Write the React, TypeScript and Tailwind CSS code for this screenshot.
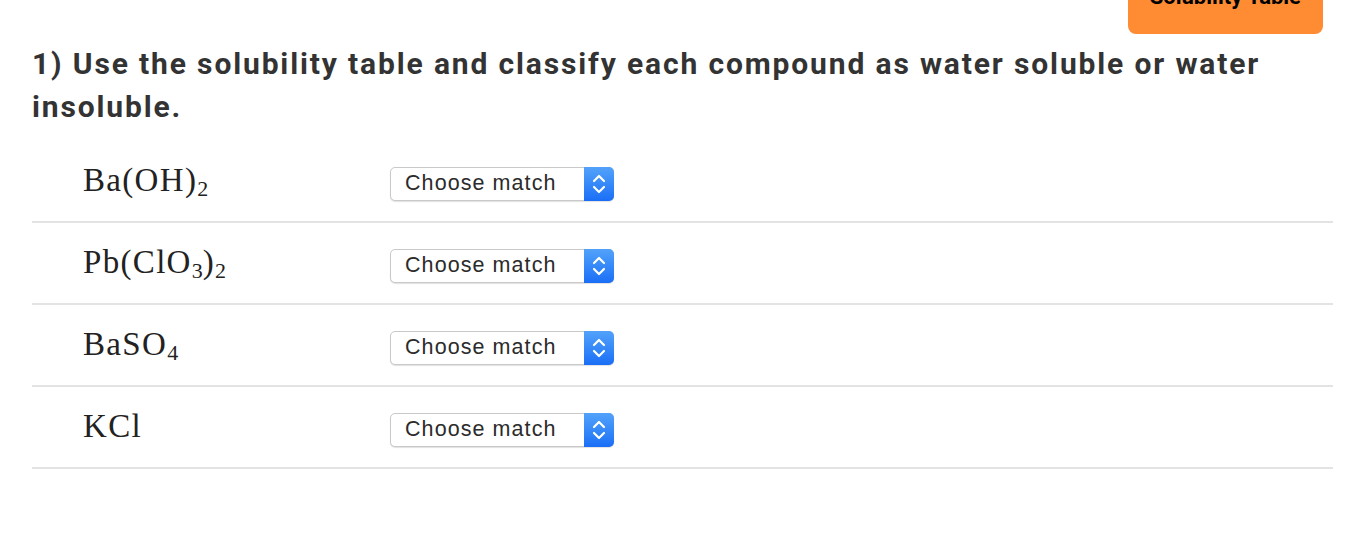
import React from 'react';

type Compound = { id: string; parts: { text: string; sub?: boolean }[] };

const compounds: Compound[] = [
    { id: 'baoh2', parts: [{ text: 'Ba(OH)' }, { text: '2', sub: true }] },
    { id: 'pbclo32', parts: [{ text: 'Pb(ClO' }, { text: '3', sub: true }, { text: ')' }, { text: '2', sub: true }] },
    { id: 'baso4', parts: [{ text: 'BaSO' }, { text: '4', sub: true }] },
    { id: 'kcl', parts: [{ text: 'KCl' }] },
];

function Formula({ parts }: { parts: Compound['parts'] }) {
    return (
        <span className="font-['Liberation_Serif',serif] text-[33px] leading-none tracking-[0.04em] text-[#222]">
            {parts.map((p, i) =>
                p.sub ? (
                    <span key={i} className="relative top-[5px] text-[22px] tracking-normal">{p.text}</span>
                ) : (
                    <span key={i}>{p.text}</span>
                )
            )}
        </span>
    );
}

function MatchSelect() {
    return (
        <div className="mt-[6px] flex h-[34px] w-[224px] items-stretch rounded-[5px] border border-[#c9c9c9] bg-white shadow-[0_1px_1px_rgba(0,0,0,0.12)]">
            <div className="flex flex-1 items-center pl-[14px] font-['Liberation_Sans',Arial,sans-serif] text-[21.5px] tracking-[0.05em] text-[#2b2b2b]">
                Choose match
            </div>
            <div className="-my-px -mr-px flex w-[30px] items-center justify-center rounded-r-[5px] bg-gradient-to-b from-[#52a2fa] to-[#1a6ef6]">
                <svg width="16" height="24" viewBox="0 0 16 24" fill="none" stroke="white" strokeWidth="2.2" strokeLinecap="round" strokeLinejoin="round">
                    <path d="M3 9 L8 4 L13 9" />
                    <path d="M3 15 L8 20 L13 15" />
                </svg>
            </div>
        </div>
    );
}

export default function App() {
    return (
        <div className="min-h-screen bg-white font-['Roboto',sans-serif]">
            {/* Solubility table button, scrolled partly out of view */}
            <div className="flex justify-end pr-[39px]">
                <button className="-mt-[36px] rounded-[8px] bg-[#ff8b33] px-[22px] pb-[26px] pt-[22px] text-[22px] font-bold leading-[22px] text-black">
                    Solubility Table
                </button>
            </div>

            <div className="pl-[32px] pr-[29px]">
                <h1 className="mt-[8px] text-[30px] font-bold leading-[43px] tracking-[0.062em] text-[#333]">
                    1) Use the solubility table and classify each compound as water soluble or water insoluble.
                </h1>

                <div className="mt-[13px]">
                    {compounds.map((c) => (
                        <div key={c.id} className="flex h-[82px] items-center border-b-2 border-[#e3e3e3] pb-[1px] pl-[51px]">
                            <div className="w-[307px]">
                                <Formula parts={c.parts} />
                            </div>
                            <MatchSelect />
                        </div>
                    ))}
                </div>
            </div>
        </div>
    );
}
